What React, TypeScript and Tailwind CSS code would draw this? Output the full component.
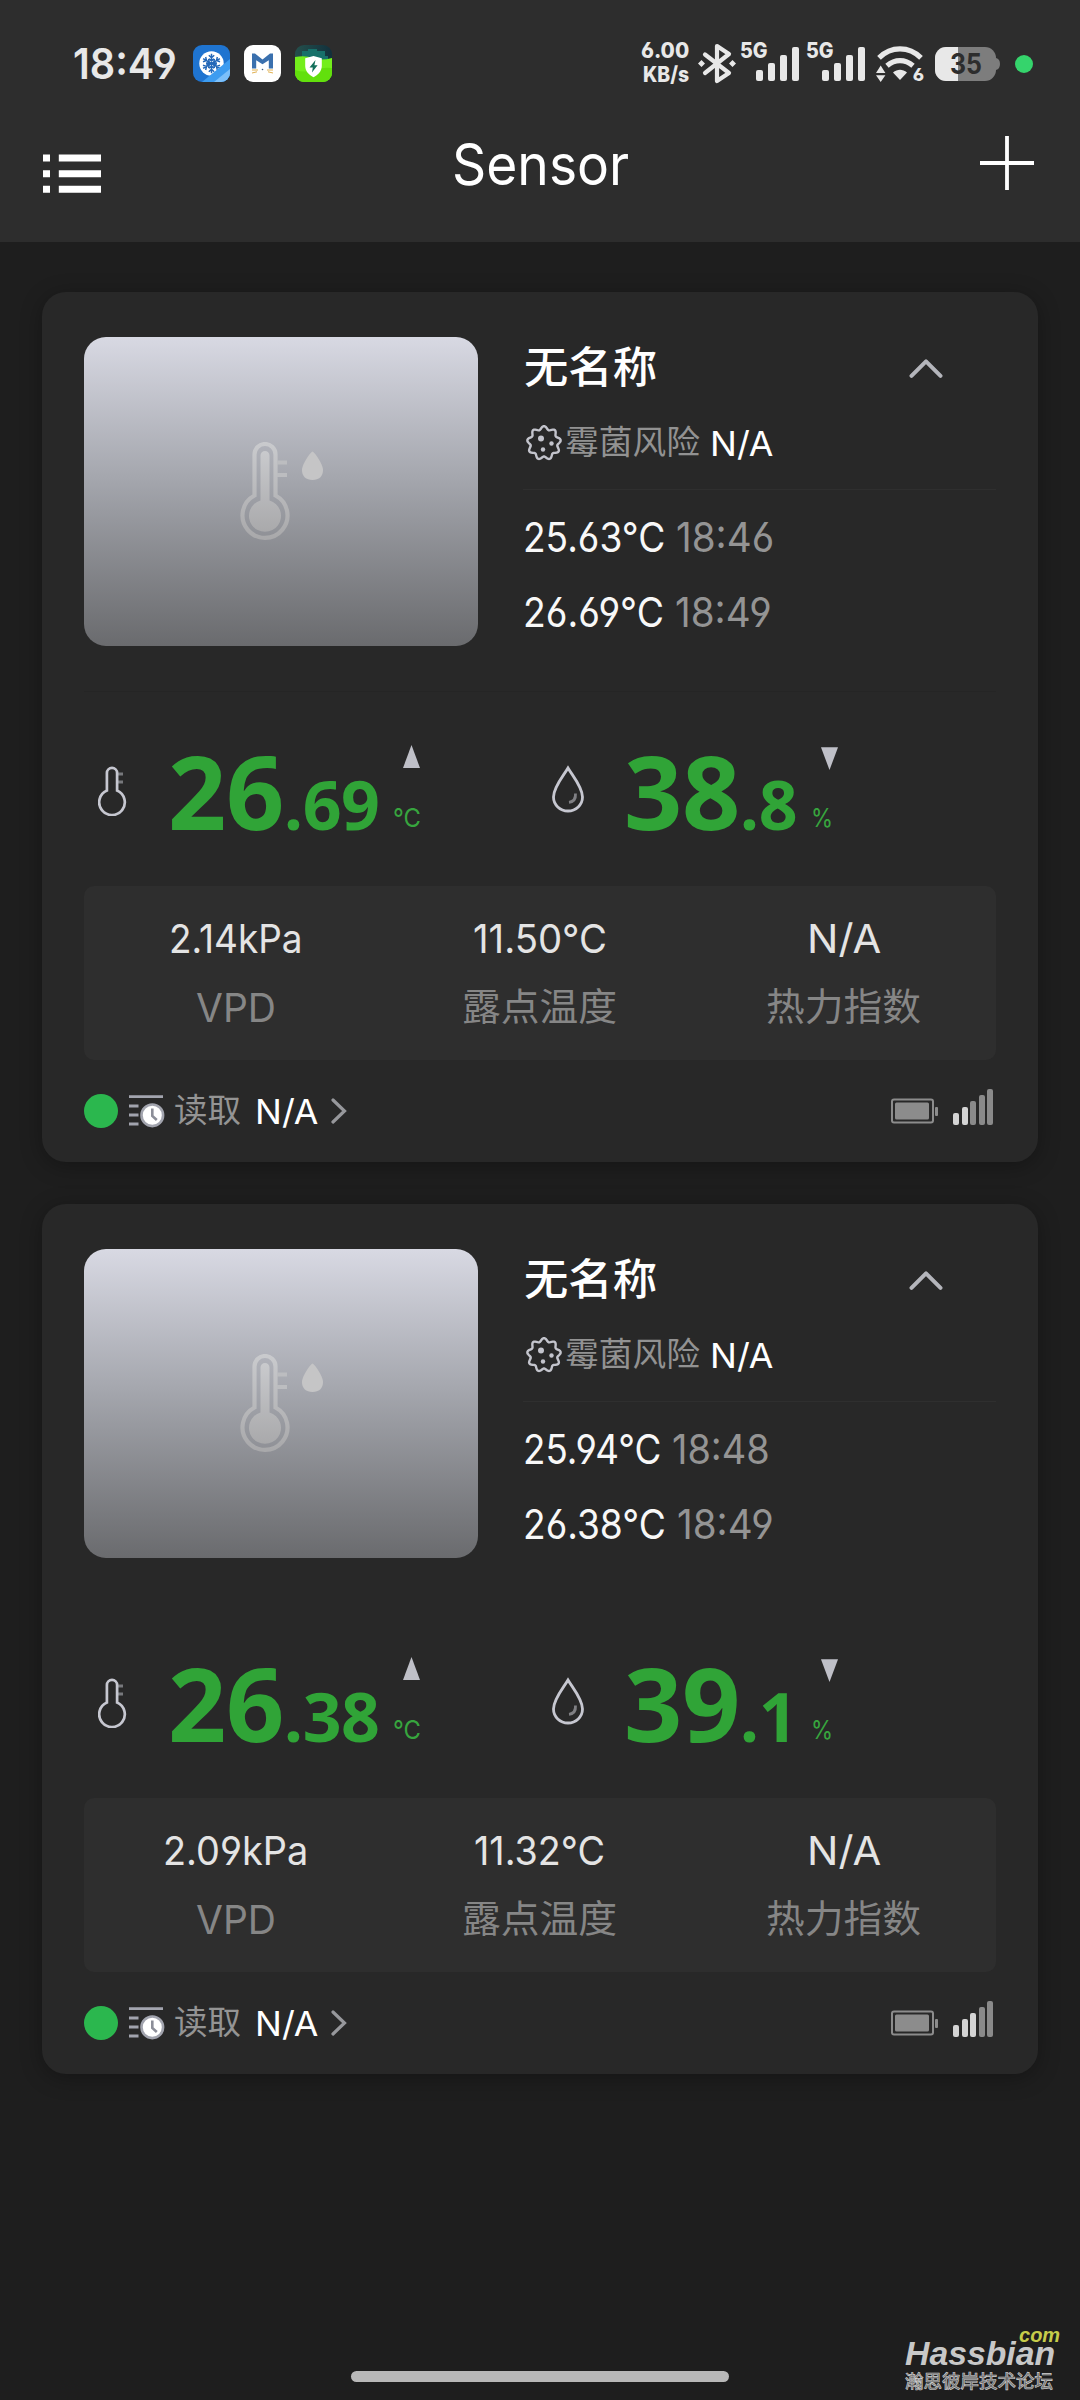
import { useLayoutEffect, useRef, useState, type ReactNode } from "react";

/** Single line of text condensed or widened to occupy an exact width. */
function Fit({ w, className = "", children }: { w: number; className?: string; children: ReactNode }) {
  const ref = useRef<HTMLSpanElement>(null);
  const [scale, setScale] = useState(1);
  useLayoutEffect(() => {
    if (ref.current) setScale(w / ref.current.offsetWidth);
  }, [w, children]);
  return (
    <span className={`block shrink-0 whitespace-nowrap ${className}`} style={{ width: w }}>
      <span ref={ref} className="inline-block origin-left" style={{ transform: `scaleX(${scale})` }}>
        {children}
      </span>
    </span>
  );
}

type Reading = { value: string; vw: number; time: string; tw: number };
type Sensor = {
  readings: Reading[];
  temp: [string, string];
  hum: [string, string];
  stats: { value: string; vw: number; label: string; lw: number }[];
  bars: number;
  divider: string;
};

const sensors: Sensor[] = [
  {
    readings: [
      { value: "25.63°C", vw: 142, time: "18:46", tw: 98 },
      { value: "26.69°C", vw: 141, time: "18:49", tw: 97 },
    ],
    temp: ["26", "69"],
    hum: ["38", "8"],
    stats: [
      { value: "2.14kPa", vw: 134, label: "VPD", lw: 80 },
      { value: "11.50°C", vw: 134, label: "露点温度", lw: 155 },
      { value: "N/A", vw: 74, label: "热力指数", lw: 155 },
    ],
    bars: 2,
    divider: "bg-[#252525]",
  },
  {
    readings: [
      { value: "25.94°C", vw: 138, time: "18:48", tw: 98 },
      { value: "26.38°C", vw: 143, time: "18:49", tw: 97 },
    ],
    temp: ["26", "38"],
    hum: ["39", "1"],
    stats: [
      { value: "2.09kPa", vw: 145, label: "VPD", lw: 80 },
      { value: "11.32°C", vw: 131, label: "露点温度", lw: 155 },
      { value: "N/A", vw: 74, label: "热力指数", lw: 155 },
    ],
    bars: 3,
    divider: "bg-[#282828]",
  },
];

function SnowApp() {
  return (
    <svg className="h-[37px] w-[37px]" viewBox="0 0 37 37">
      <defs>
        <clipPath id="snowClip">
          <rect width="37" height="37" rx="9" />
        </clipPath>
      </defs>
      <g clipPath="url(#snowClip)">
        <rect width="37" height="37" fill="#1f74d0" />
        <circle cx="18.5" cy="18.5" r="12.2" fill="#fff" />
        <g stroke="#2468b8" strokeWidth="1.5" fill="none">
          {[0, 60, 120, 180, 240, 300].map((a) => (
            <path key={a} transform={`rotate(${a} 18.5 18.5)`} d="M18.5 18.500V8.800M15.800 10.200l2.700 2.500 2.700-2.500M16 13.700l2.500 2.200 2.500-2.200" />
          ))}
        </g>
        <path d="M9 37 37 14v23z" fill="#3d9cf0" />
        <path d="M21 37 37 24v13z" fill="#7cc0fa" />
      </g>
    </svg>
  );
}

function MonkeyApp() {
  return (
    <svg className="h-[37px] w-[37px]" viewBox="0 0 37 37">
      <rect width="37" height="37" rx="9" fill="#fff" />
      <path d="M8 23.5V8.5h3l7.500 6 7.500-6h3v15h-4.200v-8.200l-6.300 4-6.300-4v8.200z" fill="#3a70ae" />
      <path d="M8 25h6M8 28l5-1.200M29 25h-6M29 28l-5-1.200" stroke="#e0b050" strokeWidth="1" />
      <circle cx="18.5" cy="24.5" r=".8" fill="#3a5c80" />
    </svg>
  );
}

function ShieldApp() {
  return (
    <svg className="h-[37px] w-[37px]" viewBox="0 0 37 37">
      <defs>
        <clipPath id="shieldClip">
          <rect width="37" height="37" rx="9" />
        </clipPath>
        <linearGradient id="shieldTop" x1="0" y1="0" x2="1" y2="0">
          <stop offset="0" stopColor="#24504c" />
          <stop offset="1" stopColor="#12303c" />
        </linearGradient>
      </defs>
      <g clipPath="url(#shieldClip)">
        <rect width="37" height="37" fill="url(#shieldTop)" />
        <path d="M7 6h6V4h9v2h8v5h3v5H7z" fill="#17706a" />
        <path d="M0 12q10-2 18 1t19 0v24H0z" fill="#74ee1c" />
        <path d="M0 25q10 3 19 0t18-2v14H0z" fill="#62e00c" />
        <path d="M18.500 11l8.300 2.200v7.800c0 5-3.800 9-8.300 11.200-4.500-2.200-8.300-6.200-8.300-11.200v-7.800z" fill="#fff" />
        <path d="M20.500 15l-6 7.600h3.300l-.8 5 5.600-7.400h-3.200z" fill="#14705c" />
      </g>
    </svg>
  );
}

function Bluetooth() {
  return (
    <svg className="ml-[9px] h-[41px] w-[38px] shrink-0" viewBox="0 0 38 41">
      <path d="M7 11.500 31 30 19 38V3l12 8L7 30" fill="none" stroke="#e8e8e8" strokeWidth="4.200" strokeLinejoin="round" strokeLinecap="round" />
      <path d="M3.500 17 7 20.500 3.500 24 0 20.500zM34.500 17l3.500 3.500-3.500 3.500-3.500-3.500z" fill="#e8e8e8" />
    </svg>
  );
}

function CellSignal() {
  return (
    <div className="relative h-[38px] w-[59px] shrink-0">
      <div className="absolute -top-[4px] left-0 text-[21px] leading-[20px] font-extrabold">
        <Fit w={28}>5G</Fit>
      </div>
      <div className="flex h-[36px] items-end justify-end gap-[5px]">
        <div className="h-[11px] w-[7px] rounded-[2px] bg-[#e8e8e8]" />
        <div className="h-[18px] w-[7px] rounded-[2px] bg-[#e8e8e8]" />
        <div className="h-[26px] w-[7px] rounded-[2px] bg-[#e8e8e8]" />
        <div className="h-[34px] w-[7px] rounded-[2px] bg-[#e8e8e8]" />
      </div>
    </div>
  );
}

function Wifi() {
  return (
    <div className="relative ml-[11px] h-[36px] w-[48px] shrink-0">
      <svg className="h-[36px] w-[48px]" viewBox="0 0 48 36">
        <g fill="none" stroke="#e8e8e8" strokeWidth="5.200">
          <path d="M3 11.800C15-.2 33-.2 45 11.800" />
          <path d="M11 19.800c8-6.800 18-6.800 26 0" />
        </g>
        <path d="M17 26.500c4.500-3.600 9.500-3.600 14 0L24 34z" fill="#e8e8e8" />
        <path d="M0 27l4.700-7.500L9.400 27zM0 29.200h9.400L4.700 36z" fill="#e8e8e8" />
      </svg>
      <div className="absolute top-[20px] right-0 text-[18px] leading-[18px] font-extrabold">6</div>
    </div>
  );
}

function StatusBattery() {
  return (
    <div className="relative ml-[11px] h-[34px] w-[65px] shrink-0">
      <svg className="h-[34px] w-[65px]" viewBox="0 0 65 34">
        <defs>
          <clipPath id="batClip">
            <rect width="61" height="34" rx="11" />
          </clipPath>
        </defs>
        <path d="M59 11h2q4 1 4 6t-4 6h-2z" fill="#7d7d7d" />
        <g clipPath="url(#batClip)">
          <rect width="61" height="34" fill="#7d7d7d" />
          <rect width="23" height="34" fill="#e8e8e8" />
        </g>
      </svg>
      <div className="absolute top-0 left-[15px] text-[28px] leading-[34px] font-bold text-[#2d2d2d]">
        <Fit w={32}>35</Fit>
      </div>
    </div>
  );
}

function Preview() {
  return (
    <div className="flex h-[309px] w-[394px] shrink-0 rounded-[22px] bg-linear-to-b from-[#d8d9e3] via-[#a4a6ad] via-46% to-[#6a6b6e]">
      <svg className="mt-[105px] ml-[156px] h-[100px] w-[84px]" viewBox="0 0 84 100">
        <defs>
          <linearGradient id="thermo" x1="0" y1="0" x2="0" y2="1">
            <stop offset="0" stopColor="#c9cacd" />
            <stop offset="1" stopColor="#a9a9ab" />
          </linearGradient>
        </defs>
        <path
          d="M14.500 53.500V12.500a10.500 10.500 0 0 1 21 0V53.500A22.500 22.500 0 1 1 14.500 53.500z"
          fill="none"
          stroke="url(#thermo)"
          strokeWidth="4.200"
        />
        <path d="M20.500 58.500V13.500a4.500 4.500 0 0 1 9 0V58.500A16 16 0 1 1 20.500 58.500z" fill="url(#thermo)" />
        <path d="M37 20.500h10M37 33h10" stroke="#bcbdc0" strokeWidth="4" />
        <path d="M72.500 9.500c1.500 0 10.500 12.500 10.500 18.500 0 6.500-4 10-10.500 10S62 34.500 62 28c0-6 9-18.500 10.500-18.500z" fill="#c5c5c6" />
      </svg>
    </div>
  );
}

const moldOutline = Array.from({ length: 108 }, (_, i) => {
  const t = (i / 108) * Math.PI * 2;
  const r = 15.2 + 1.7 * Math.cos(9 * t);
  return `${(18 + r * Math.sin(t)).toFixed(2)},${(18 - r * Math.cos(t)).toFixed(2)}`;
}).join(" ");

function MoldIcon() {
  return (
    <svg className="h-[36px] w-[36px] shrink-0" viewBox="0 0 36 36">
      <polygon points={moldOutline} fill="none" stroke="#c3c4cc" strokeWidth="2.400" strokeLinejoin="round" />
      <circle cx="15" cy="13.500" r="3" fill="#c3c4cc" />
      <circle cx="25.500" cy="18.500" r="2.200" fill="#c3c4cc" />
      <circle cx="17" cy="24.500" r="2.200" fill="#c3c4cc" />
    </svg>
  );
}

function Thermometer() {
  return (
    <svg className="mt-[74px] ml-3.5 h-[50px] w-[29px] shrink-0" viewBox="0 0 29 50">
      <path d="M20 8h5M20 16h5" stroke="#77787c" strokeWidth="3" />
      <path d="M8.900 24.500V7a5 5 0 0 1 10.200 0V24.500A12.800 12.800 0 1 1 8.900 24.500z" fill="none" stroke="#c6c7d0" strokeWidth="2.700" />
    </svg>
  );
}

function Drop() {
  return (
    <svg className="mt-[73px] ml-3 h-[48px] w-[32px] shrink-0" viewBox="0 0 32 48">
      <path d="M16 3C12 10 1.500 22 1.500 32a14.500 14 0 0 0 29 0C30.500 22 20 10 16 3z" fill="none" stroke="#c6c7d0" strokeWidth="2.800" />
      <path d="M23.500 28.500q.5 8-6.500 8.800" fill="none" stroke="#808084" strokeWidth="2.800" />
    </svg>
  );
}

function BigValue({ whole, frac, unit, up }: { whole: string; frac: string; unit: string; up?: boolean }) {
  return (
    <>
      <div className="mt-[48px] flex h-[102px] items-baseline font-['Open_Sans','Noto_Sans',sans-serif] text-[102px] leading-[102px] font-bold text-[#30a437]">
        <span className="tracking-[-0.4px]">{whole}</span>
        <span className="text-[68px] tracking-[-0.6px]">.{frac}</span>
      </div>
      <div className="mt-[53px] ml-[14px] flex flex-col">
        <svg className="ml-[10px] h-[25px] w-[17px]" viewBox="0 0 17 25">
          <path d={up ? "M8.500 0 17 23H0z" : "M0 2.300h17L8.500 25z"} fill="#bfc0c8" />
        </svg>
        <div className="mt-[34px] text-[25.500px] leading-[27px] text-[#37a53e]">
          <Fit w={up ? 28 : 22}>{unit}</Fit>
        </div>
      </div>
    </>
  );
}

function HistoryIcon() {
  return (
    <svg className="ml-[11px] h-[34px] w-[36px] shrink-0" viewBox="0 0 36 34">
      <path d="M0 2.700h34M0 12h9.500M0 21h9.500M0 30h9.500" stroke="#a2a4ae" strokeWidth="2.800" />
      <circle cx="23.300" cy="21.300" r="10.800" fill="#fff" stroke="#a2a4ae" strokeWidth="2.600" />
      <path d="M23.300 14.500v7.500l4.500 4" fill="none" stroke="#8c8e98" strokeWidth="2.600" />
    </svg>
  );
}

const barHeights = ["h-[12px]", "h-[18px]", "h-[24px]", "h-[30px]", "h-[36px]"];

function Card({ s }: { s: Sensor }) {
  return (
    <section className="h-[870px] rounded-[24px] bg-[#282828] px-[42px] pt-[45px] shadow-[0_4px_22px_rgba(0,0,0,0.3)]">
      <div className="flex h-[309px]">
        <Preview />
        <div className="ml-[45px] flex min-w-0 flex-1 flex-col">
          <div className="flex h-[56px] items-center justify-between">
            <span className="mt-[3px] ml-px text-[43px] leading-[56px] font-medium text-white">
              <Fit w={133}>无名称</Fit>
            </span>
            <svg className="mt-[6px] mr-[53px] h-[22px] w-[34px]" viewBox="0 0 34 22">
              <path d="M2.500 18.800 17 4.300l14.500 14.500" fill="none" stroke="#b4b5bb" strokeWidth="4" strokeLinecap="round" strokeLinejoin="round" />
            </svg>
          </div>
          <div className="mt-[25px] flex h-[50px] items-center pl-[3px]">
            <MoldIcon />
            <Fit w={135} className="ml-[3px] text-[32.500px] leading-[50px] text-[#929292]">
              霉菌风险
            </Fit>
            <Fit w={64} className="mt-[2px] ml-[10px] text-[34px] leading-[50px] text-white">
              N/A
            </Fit>
          </div>
          <div className="mt-[21px] h-px bg-[#2f2f2f]" />
          {s.readings.map((r, i) => (
            <div key={i} className={i === 0 ? "mt-[22px] flex h-[50px]" : "mt-[25px] flex h-[50px]"}>
              <Fit w={r.vw} className="text-[41px] leading-[50px] text-[#f8f8f8]">
                {r.value}
              </Fit>
              <Fit w={r.tw} className="ml-[11px] text-[41px] leading-[50px] text-[#949494]">
                {r.time}
              </Fit>
            </div>
          ))}
        </div>
      </div>
      <div className={`mt-[45px] h-px ${s.divider}`} />
      <div className="grid h-[194px] grid-cols-2">
        <div className="flex items-start">
          <Thermometer />
          <div className="w-[41px]" />
          <BigValue whole={s.temp[0]} frac={s.temp[1]} unit="°C" up />
        </div>
        <div className="flex items-start">
          <Drop />
          <div className="w-[40px]" />
          <BigValue whole={s.hum[0]} frac={s.hum[1]} unit="%" />
        </div>
      </div>
      <div className="grid h-[174px] grid-cols-3 rounded-[10px] bg-[#2e2e2e] pt-[28px]">
        {s.stats.map((t) => (
          <div key={t.label} className="flex flex-col items-center pr-px">
            <Fit w={t.vw} className="text-[40px] leading-[50px] text-[#e4e4e4]">
              {t.value}
            </Fit>
            <Fit
              w={t.lw}
              className={
                t.label === "VPD"
                  ? "mt-[19px] text-[40px] leading-[50px] text-[#868686]"
                  : "mt-[18px] text-[37.500px] leading-[50px] text-[#868686]"
              }
            >
              {t.label}
            </Fit>
          </div>
        ))}
      </div>
      <div className="flex h-[102px] items-center">
        <div className="size-[34px] shrink-0 rounded-full bg-[#2bb74e]" />
        <HistoryIcon />
        <Fit w={67} className="mt-[-1px] ml-[9px] text-[32.500px] leading-[50px] text-[#949494]">
          读取
        </Fit>
        <Fit w={64} className="mt-[2px] ml-[14px] text-[34px] leading-[50px] text-white">
          N/A
        </Fit>
        <svg className="ml-[12px] h-[26px] w-[16px]" viewBox="0 0 16 26">
          <path d="M2 2l11.500 11L2 24" fill="none" stroke="#97989c" strokeWidth="3.200" strokeLinecap="round" />
        </svg>
        <svg className="ml-auto h-[26px] w-[47px]" viewBox="0 0 47 26">
          <rect x="1" y="1.500" width="41" height="23" rx="2" fill="none" stroke="#8c8c8c" strokeWidth="2" />
          <rect x="4" y="4.500" width="34" height="17" rx="1.500" fill="#8c8c8c" />
          <rect x="44" y="9" width="3" height="9" rx="1" fill="#8c8c8c" />
        </svg>
        <div className="mt-[-8px] mr-[3px] ml-[15px] flex items-end gap-[2.500px]">
          {barHeights.map((h, i) => (
            <div key={h} className={`w-[6px] rounded-[2px] ${h} ${i < s.bars ? "bg-[#d4d4d4]" : "bg-[#8a8a8a]"}`} />
          ))}
        </div>
      </div>
    </section>
  );
}

export default function App() {
  return (
    <div className="relative flex h-[2400px] w-[1080px] flex-col overflow-hidden bg-[#1e1e1e] font-['Inter','Noto_Sans_CJK_SC',sans-serif] [font-feature-settings:'cv03','cv04']">
      <header className="h-[242px] shrink-0 bg-[#2d2d2d]">
        <div className="flex h-[127px] items-center pl-[73px] text-[#e8e8e8]">
          <Fit w={104} className="text-[42px] leading-[50px] font-semibold">
            18:49
          </Fit>
          <div className="ml-4 flex gap-[14px]">
            <SnowApp />
            <MonkeyApp />
            <ShieldApp />
          </div>
          <div className="mr-[47px] ml-auto flex items-center">
            <div className="mt-[-4px] flex flex-col items-end text-[21.500px] leading-[24px] font-extrabold">
              <Fit w={48}>6.00</Fit>
              <Fit w={46}>KB/s</Fit>
            </div>
            <Bluetooth />
            <div className="ml-[4px] flex gap-[7px]">
              <CellSignal />
              <CellSignal />
            </div>
            <Wifi />
            <StatusBattery />
            <div className="ml-[15px] size-[18px] rounded-full bg-[#35d46c]" />
          </div>
        </div>
        <div className="grid h-[74px] grid-cols-3 items-center">
          <svg className="mt-[17px] ml-[43px] h-[39px] w-[60px]" viewBox="0 0 60 39">
            <path d="M0 4h7M15.800 4H58M0 19.800h7M15.800 19.800H58M0 35.300h7M15.800 35.300H58" stroke="#fff" strokeWidth="7" />
          </svg>
          <Fit w={177} className="mt-[1px] justify-self-center text-[57px] leading-[74px] text-white">
            Sensor
          </Fit>
          <svg className="mt-[-4px] mr-[46px] h-[54px] w-[54px] justify-self-end" viewBox="0 0 54 54">
            <path d="M27 0v54M0 27h54" stroke="#fff" strokeWidth="3.800" />
          </svg>
        </div>
      </header>
      <main className="flex flex-1 flex-col gap-[42px] px-[42px] pt-[50px]">
        {sensors.map((s, i) => (
          <Card key={i} s={s} />
        ))}
      </main>
      <div className="mb-[18px] h-[11px] w-[378px] shrink-0 self-center rounded-full bg-[#b8b8b8]" />
      <div className="absolute top-[2326px] right-[20px] flex w-[156px] flex-col font-['Liberation_Sans','Noto_Sans_CJK_SC',sans-serif]">
        <Fit w={41} className="self-end text-[21px] leading-[18px] font-bold text-[#c6cc4a] italic">
          com
        </Fit>
        <Fit w={150} className="-mt-[8px] ml-px text-[34px] leading-[34px] font-bold text-[#c8c8c8] italic">
          Hassbian
        </Fit>
        <Fit w={148} className="mt-[1px] ml-[1px] text-[18px] leading-[22px] font-medium text-[#6a6a6a] [-webkit-text-stroke:0.6px_#d0d0d0]">
          瀚思彼岸技术论坛
        </Fit>
      </div>
    </div>
  );
}
